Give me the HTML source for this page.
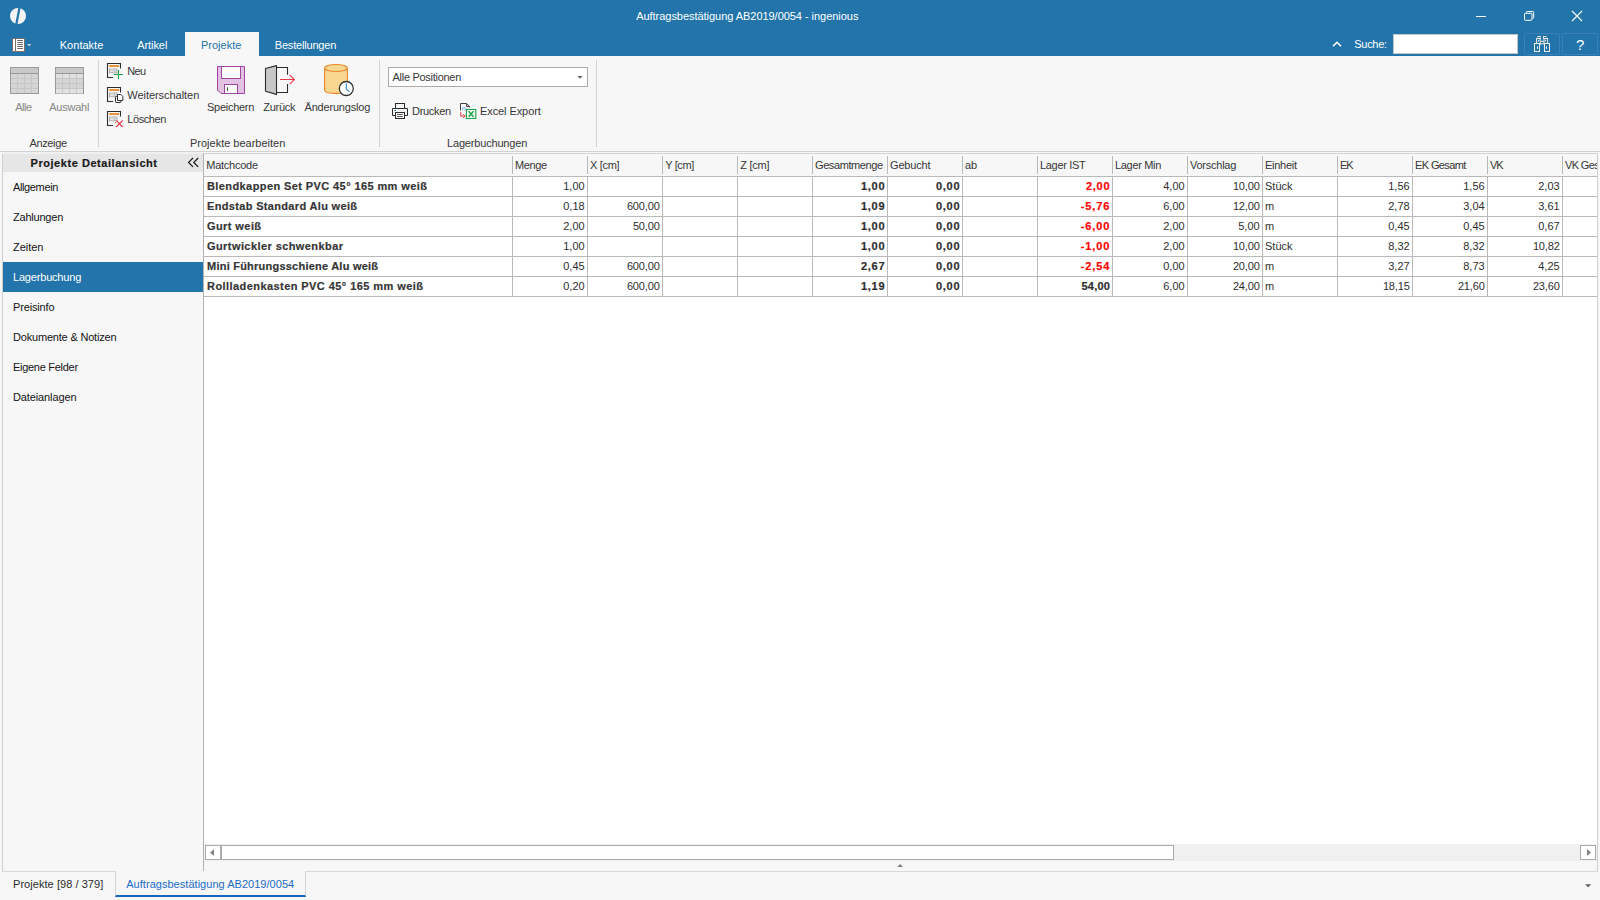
<!DOCTYPE html>
<html lang="de">
<head>
<meta charset="utf-8">
<title>Auftragsbestätigung AB2019/0054 - ingenious</title>
<style>
*{box-sizing:border-box;margin:0;padding:0}
html,body{width:1600px;height:900px;overflow:hidden;background:#f7f7f7}
body{font-family:"Liberation Sans",sans-serif;font-size:11px;color:#2b2b2b;position:relative}
.abs{position:absolute}
.t{position:absolute;white-space:nowrap;line-height:14px;height:14px}
#titlebar{left:0;top:0;width:1600px;height:56px;background:#2274aa}
#tabact{left:185px;top:32px;width:74px;height:24px;background:#f7f7f7}
#ribbon{left:0;top:56px;width:1600px;height:96px;background:#f7f7f7;border-bottom:1px solid #d2d2d2}
.rl{color:#383838}
.dis{color:#868686}
#left{left:2px;top:153px;width:201px;height:718px;background:#f7f7f7;border-left:1px solid #cfcfcf;border-top:1px solid #f0f0f0}
#lhead{left:3px;top:154px;width:200px;height:18px;background:#e6e6e6}
#navsel{left:3px;top:262px;width:200px;height:30px;background:#2274aa}
#grid{left:203px;top:153px;width:1395px;height:719px;background:#fff;border-left:1px solid #b2b2b2;border-right:1px solid #cfcfcf;border-top:1px solid #d4d4d4}
#ghead{left:204px;top:154px;width:1393px;height:22px;background:#f7f7f7}
.hl{position:absolute;left:204px;width:1393px;height:1px;background:#b9b9b9}
.vl{position:absolute;top:177px;height:120px;width:1px;background:#b9b9b9}
.hs{position:absolute;top:156px;height:18px;width:1px;background:#b9b9b9}
.h{color:#363636}
.b{font-weight:bold;-webkit-text-stroke:0.2px}
</style>
</head>
<body>
<div id="titlebar" class="abs"></div>
<div id="tabact" class="abs"></div>
<div id="ribbon" class="abs"></div>
<div id="left" class="abs"></div>
<div id="lhead" class="abs"></div>
<div id="navsel" class="abs"></div>
<div id="grid" class="abs"></div>
<div id="ghead" class="abs"></div>
<div class="t" style="left:636.20px;letter-spacing:-0.039px;top:9.19px;color:#ffffff;">Auftragsbestätigung AB2019/0054 - ingenious</div>
<div class="t" style="left:59.75px;letter-spacing:0.019px;top:38.19px;color:#ffffff;">Kontakte</div>
<div class="t" style="left:137.25px;letter-spacing:-0.077px;top:38.19px;color:#ffffff;">Artikel</div>
<div class="t" style="left:201.00px;letter-spacing:-0.004px;top:38.19px;color:#2274aa;">Projekte</div>
<div class="t" style="left:274.75px;letter-spacing:-0.187px;top:38.19px;color:#ffffff;">Bestellungen</div>
<div class="t" style="left:1354.25px;letter-spacing:-0.286px;top:37.19px;color:#ffffff;">Suche:</div>
<div class="abs" style="left:1393px;top:34px;width:125px;height:20px;background:#ffffff;border:1px solid #c6c6c6;"></div>
<div class="t" style="left:1576.10px;top:37.80px;font-size:15px;color:#ffffff;">?</div>
<div class="abs" style="left:98px;top:60px;width:1px;height:87px;background:#d2d2d2;"></div>
<div class="abs" style="left:379px;top:60px;width:1px;height:87px;background:#d2d2d2;"></div>
<div class="abs" style="left:596px;top:60px;width:1px;height:87px;background:#d2d2d2;"></div>
<div class="t dis" style="left:15.25px;letter-spacing:-0.498px;top:100.19px;">Alle</div>
<div class="t dis" style="left:49.25px;letter-spacing:-0.249px;top:100.19px;">Auswahl</div>
<div class="t rl" style="left:29.50px;letter-spacing:-0.364px;top:136.19px;">Anzeige</div>
<div class="t rl" style="left:127.25px;letter-spacing:-0.669px;top:64.19px;">Neu</div>
<div class="t rl" style="left:127.25px;letter-spacing:-0.037px;top:88.19px;">Weiterschalten</div>
<div class="t rl" style="left:127.25px;letter-spacing:-0.421px;top:112.19px;">Löschen</div>
<div class="t rl" style="left:207.00px;letter-spacing:-0.277px;top:100.19px;">Speichern</div>
<div class="t rl" style="left:263.25px;letter-spacing:-0.255px;top:100.19px;">Zurück</div>
<div class="t rl" style="left:304.50px;letter-spacing:-0.190px;top:100.19px;">Änderungslog</div>
<div class="t rl" style="left:190.00px;letter-spacing:-0.007px;top:136.19px;">Projekte bearbeiten</div>
<div class="abs" style="left:388px;top:67px;width:200px;height:20px;background:#ffffff;border:1px solid #ababab;"></div>
<div class="t rl" style="left:392.50px;letter-spacing:-0.283px;top:70.19px;">Alle Positionen</div>
<div class="t rl" style="left:412.00px;letter-spacing:-0.311px;top:104.19px;">Drucken</div>
<div class="t rl" style="left:480.00px;letter-spacing:-0.085px;top:104.19px;">Excel Export</div>
<div class="t rl" style="left:447.00px;letter-spacing:-0.177px;top:136.19px;">Lagerbuchungen</div>
<div class="abs" style="left:3px;top:152px;width:200px;height:1px;background:#f1f1f1;"></div>
<div class="t b" style="left:30.50px;letter-spacing:0.552px;top:156.19px;color:#1a1a1a;">Projekte Detailansicht</div>
<div class="t" style="left:13.00px;letter-spacing:-0.370px;top:180.19px;color:#141414;">Allgemein</div>
<div class="t" style="left:13.00px;letter-spacing:-0.210px;top:210.19px;color:#141414;">Zahlungen</div>
<div class="t" style="left:13.00px;letter-spacing:-0.049px;top:240.19px;color:#141414;">Zeiten</div>
<div class="t" style="left:13.00px;letter-spacing:-0.187px;top:270.19px;color:#ffffff;">Lagerbuchung</div>
<div class="t" style="left:13.00px;letter-spacing:-0.152px;top:300.19px;color:#141414;">Preisinfo</div>
<div class="t" style="left:13.00px;letter-spacing:-0.192px;top:330.19px;color:#141414;">Dokumente &amp; Notizen</div>
<div class="t" style="left:13.00px;letter-spacing:-0.286px;top:360.19px;color:#141414;">Eigene Felder</div>
<div class="t" style="left:13.00px;letter-spacing:-0.116px;top:390.19px;color:#141414;">Dateianlagen</div>
<div class="hl" style="top:176px"></div>
<div class="hl" style="top:196px"></div>
<div class="hl" style="top:216px"></div>
<div class="hl" style="top:236px"></div>
<div class="hl" style="top:256px"></div>
<div class="hl" style="top:276px"></div>
<div class="hl" style="top:296px"></div>
<div class="hs" style="left:512px"></div>
<div class="vl" style="left:512px"></div>
<div class="hs" style="left:587px"></div>
<div class="vl" style="left:587px"></div>
<div class="hs" style="left:662px"></div>
<div class="vl" style="left:662px"></div>
<div class="hs" style="left:737px"></div>
<div class="vl" style="left:737px"></div>
<div class="hs" style="left:812px"></div>
<div class="vl" style="left:812px"></div>
<div class="hs" style="left:887px"></div>
<div class="vl" style="left:887px"></div>
<div class="hs" style="left:962px"></div>
<div class="vl" style="left:962px"></div>
<div class="hs" style="left:1037px"></div>
<div class="vl" style="left:1037px"></div>
<div class="hs" style="left:1112px"></div>
<div class="vl" style="left:1112px"></div>
<div class="hs" style="left:1187px"></div>
<div class="vl" style="left:1187px"></div>
<div class="hs" style="left:1262px"></div>
<div class="vl" style="left:1262px"></div>
<div class="hs" style="left:1337px"></div>
<div class="vl" style="left:1337px"></div>
<div class="hs" style="left:1412px"></div>
<div class="vl" style="left:1412px"></div>
<div class="hs" style="left:1487px"></div>
<div class="vl" style="left:1487px"></div>
<div class="hs" style="left:1562px"></div>
<div class="vl" style="left:1562px"></div>
<div class="t h" style="left:206.25px;letter-spacing:-0.249px;top:158.19px;">Matchcode</div>
<div class="t h" style="left:515.00px;letter-spacing:-0.389px;top:158.19px;">Menge</div>
<div class="t h" style="left:590.00px;letter-spacing:-0.317px;top:158.19px;">X [cm]</div>
<div class="t h" style="left:665.25px;letter-spacing:-0.377px;top:158.19px;">Y [cm]</div>
<div class="t h" style="left:740.25px;letter-spacing:-0.242px;top:158.19px;">Z [cm]</div>
<div class="t h" style="left:815.00px;letter-spacing:-0.409px;top:158.19px;">Gesamtmenge</div>
<div class="t h" style="left:890.00px;letter-spacing:-0.171px;top:158.19px;">Gebucht</div>
<div class="t h" style="left:965.00px;letter-spacing:-0.150px;top:158.19px;">ab</div>
<div class="t h" style="left:1040.00px;letter-spacing:-0.312px;top:158.19px;">Lager IST</div>
<div class="t h" style="left:1115.00px;letter-spacing:-0.323px;top:158.19px;">Lager Min</div>
<div class="t h" style="left:1190.00px;letter-spacing:-0.247px;top:158.19px;">Vorschlag</div>
<div class="t h" style="left:1265.00px;letter-spacing:-0.259px;top:158.19px;">Einheit</div>
<div class="t h" style="left:1340.00px;letter-spacing:-1.000px;top:158.19px;">EK</div>
<div class="t h" style="left:1415.00px;letter-spacing:-0.616px;top:158.19px;">EK Gesamt</div>
<div class="t h" style="left:1490.00px;letter-spacing:-1.000px;top:158.19px;">VK</div>
<div class="abs" style="left:1563px;top:154px;width:34px;height:22px;overflow:hidden">
<div class="t h" style="left:2px;top:4.19px;letter-spacing:-0.623px">VK Gesamt</div></div>
<div class="t b" style="left:207.00px;letter-spacing:0.406px;top:179.19px;color:#363636;">Blendkappen Set PVC 45° 165 mm weiß</div>
<div class="t" style="right:1015.30px;top:179.19px;letter-spacing:0.021px;color:#2e2e2e;">1,00</div>
<div class="t b" style="right:714.80px;top:179.19px;letter-spacing:0.688px;color:#2e2e2e;">1,00</div>
<div class="t b" style="right:639.80px;top:179.19px;letter-spacing:0.688px;color:#2e2e2e;">0,00</div>
<div class="t b" style="right:489.80px;top:179.19px;letter-spacing:0.688px;color:#ff0000;">2,00</div>
<div class="t" style="right:415.30px;top:179.19px;letter-spacing:0.021px;color:#2e2e2e;">4,00</div>
<div class="t" style="right:340.30px;top:179.19px;letter-spacing:-0.141px;color:#2e2e2e;">10,00</div>
<div class="t" style="left:1265.00px;top:179.19px;color:#2e2e2e;">Stück</div>
<div class="t" style="right:190.30px;top:179.19px;letter-spacing:0.021px;color:#2e2e2e;">1,56</div>
<div class="t" style="right:115.30px;top:179.19px;letter-spacing:0.021px;color:#2e2e2e;">1,56</div>
<div class="t" style="right:40.30px;top:179.19px;letter-spacing:0.021px;color:#2e2e2e;">2,03</div>
<div class="t b" style="left:207.00px;letter-spacing:0.335px;top:199.19px;color:#363636;">Endstab Standard Alu weiß</div>
<div class="t" style="right:1015.30px;top:199.19px;letter-spacing:0.021px;color:#2e2e2e;">0,18</div>
<div class="t" style="right:940.30px;top:199.19px;letter-spacing:-0.138px;color:#2e2e2e;">600,00</div>
<div class="t b" style="right:714.80px;top:199.19px;letter-spacing:0.688px;color:#2e2e2e;">1,09</div>
<div class="t b" style="right:639.80px;top:199.19px;letter-spacing:0.688px;color:#2e2e2e;">0,00</div>
<div class="t b" style="right:489.80px;top:199.19px;letter-spacing:0.852px;color:#ff0000;">-5,76</div>
<div class="t" style="right:415.30px;top:199.19px;letter-spacing:0.021px;color:#2e2e2e;">6,00</div>
<div class="t" style="right:340.30px;top:199.19px;letter-spacing:-0.141px;color:#2e2e2e;">12,00</div>
<div class="t" style="left:1265.00px;top:199.19px;color:#2e2e2e;">m</div>
<div class="t" style="right:190.30px;top:199.19px;letter-spacing:0.021px;color:#2e2e2e;">2,78</div>
<div class="t" style="right:115.30px;top:199.19px;letter-spacing:0.021px;color:#2e2e2e;">3,04</div>
<div class="t" style="right:40.30px;top:199.19px;letter-spacing:0.021px;color:#2e2e2e;">3,61</div>
<div class="t b" style="left:207.00px;letter-spacing:0.419px;top:219.19px;color:#363636;">Gurt weiß</div>
<div class="t" style="right:1015.30px;top:219.19px;letter-spacing:0.021px;color:#2e2e2e;">2,00</div>
<div class="t" style="right:940.30px;top:219.19px;letter-spacing:-0.141px;color:#2e2e2e;">50,00</div>
<div class="t b" style="right:714.80px;top:219.19px;letter-spacing:0.688px;color:#2e2e2e;">1,00</div>
<div class="t b" style="right:639.80px;top:219.19px;letter-spacing:0.688px;color:#2e2e2e;">0,00</div>
<div class="t b" style="right:489.80px;top:219.19px;letter-spacing:0.852px;color:#ff0000;">-6,00</div>
<div class="t" style="right:415.30px;top:219.19px;letter-spacing:0.021px;color:#2e2e2e;">2,00</div>
<div class="t" style="right:340.30px;top:219.19px;letter-spacing:0.021px;color:#2e2e2e;">5,00</div>
<div class="t" style="left:1265.00px;top:219.19px;color:#2e2e2e;">m</div>
<div class="t" style="right:190.30px;top:219.19px;letter-spacing:0.021px;color:#2e2e2e;">0,45</div>
<div class="t" style="right:115.30px;top:219.19px;letter-spacing:0.021px;color:#2e2e2e;">0,45</div>
<div class="t" style="right:40.30px;top:219.19px;letter-spacing:0.021px;color:#2e2e2e;">0,67</div>
<div class="t b" style="left:207.00px;letter-spacing:0.421px;top:239.19px;color:#363636;">Gurtwickler schwenkbar</div>
<div class="t" style="right:1015.30px;top:239.19px;letter-spacing:0.021px;color:#2e2e2e;">1,00</div>
<div class="t b" style="right:714.80px;top:239.19px;letter-spacing:0.688px;color:#2e2e2e;">1,00</div>
<div class="t b" style="right:639.80px;top:239.19px;letter-spacing:0.688px;color:#2e2e2e;">0,00</div>
<div class="t b" style="right:489.80px;top:239.19px;letter-spacing:0.852px;color:#ff0000;">-1,00</div>
<div class="t" style="right:415.30px;top:239.19px;letter-spacing:0.021px;color:#2e2e2e;">2,00</div>
<div class="t" style="right:340.30px;top:239.19px;letter-spacing:-0.141px;color:#2e2e2e;">10,00</div>
<div class="t" style="left:1265.00px;top:239.19px;color:#2e2e2e;">Stück</div>
<div class="t" style="right:190.30px;top:239.19px;letter-spacing:0.021px;color:#2e2e2e;">8,32</div>
<div class="t" style="right:115.30px;top:239.19px;letter-spacing:0.021px;color:#2e2e2e;">8,32</div>
<div class="t" style="right:40.30px;top:239.19px;letter-spacing:-0.141px;color:#2e2e2e;">10,82</div>
<div class="t b" style="left:207.00px;letter-spacing:0.229px;top:259.19px;color:#363636;">Mini Führungsschiene Alu weiß</div>
<div class="t" style="right:1015.30px;top:259.19px;letter-spacing:0.021px;color:#2e2e2e;">0,45</div>
<div class="t" style="right:940.30px;top:259.19px;letter-spacing:-0.138px;color:#2e2e2e;">600,00</div>
<div class="t b" style="right:714.80px;top:259.19px;letter-spacing:0.688px;color:#2e2e2e;">2,67</div>
<div class="t b" style="right:639.80px;top:259.19px;letter-spacing:0.688px;color:#2e2e2e;">0,00</div>
<div class="t b" style="right:489.80px;top:259.19px;letter-spacing:0.852px;color:#ff0000;">-2,54</div>
<div class="t" style="right:415.30px;top:259.19px;letter-spacing:0.021px;color:#2e2e2e;">0,00</div>
<div class="t" style="right:340.30px;top:259.19px;letter-spacing:-0.141px;color:#2e2e2e;">20,00</div>
<div class="t" style="left:1265.00px;top:259.19px;color:#2e2e2e;">m</div>
<div class="t" style="right:190.30px;top:259.19px;letter-spacing:0.021px;color:#2e2e2e;">3,27</div>
<div class="t" style="right:115.30px;top:259.19px;letter-spacing:0.021px;color:#2e2e2e;">8,73</div>
<div class="t" style="right:40.30px;top:259.19px;letter-spacing:0.021px;color:#2e2e2e;">4,25</div>
<div class="t b" style="left:207.00px;letter-spacing:0.432px;top:279.19px;color:#363636;">Rollladenkasten PVC 45° 165 mm weiß</div>
<div class="t" style="right:1015.30px;top:279.19px;letter-spacing:0.021px;color:#2e2e2e;">0,20</div>
<div class="t" style="right:940.30px;top:279.19px;letter-spacing:-0.138px;color:#2e2e2e;">600,00</div>
<div class="t b" style="right:714.80px;top:279.19px;letter-spacing:0.688px;color:#2e2e2e;">1,19</div>
<div class="t b" style="right:639.80px;top:279.19px;letter-spacing:0.688px;color:#2e2e2e;">0,00</div>
<div class="t b" style="right:489.80px;top:279.19px;letter-spacing:0.234px;color:#2e2e2e;">54,00</div>
<div class="t" style="right:415.30px;top:279.19px;letter-spacing:0.021px;color:#2e2e2e;">6,00</div>
<div class="t" style="right:340.30px;top:279.19px;letter-spacing:-0.141px;color:#2e2e2e;">24,00</div>
<div class="t" style="left:1265.00px;top:279.19px;color:#2e2e2e;">m</div>
<div class="t" style="right:190.30px;top:279.19px;letter-spacing:-0.141px;color:#2e2e2e;">18,15</div>
<div class="t" style="right:115.30px;top:279.19px;letter-spacing:-0.141px;color:#2e2e2e;">21,60</div>
<div class="t" style="right:40.30px;top:279.19px;letter-spacing:-0.141px;color:#2e2e2e;">23,60</div>
<div class="abs" style="left:204px;top:844px;width:1393px;height:17px;background:#f0f0f0;"></div>
<div class="abs" style="left:205px;top:845px;width:16px;height:15px;background:#ffffff;border:1px solid #ababab;"></div>
<div class="abs" style="left:221px;top:845px;width:953px;height:15px;background:#ffffff;border:1px solid #ababab;"></div>
<div class="abs" style="left:1580px;top:845px;width:16px;height:15px;background:#ffffff;border:1px solid #ababab;"></div>
<div class="abs" style="left:204px;top:861px;width:1393px;height:10px;background:#f7f7f7;"></div>
<div class="abs" style="left:2px;top:871px;width:1596px;height:1px;background:#d9d9d9;"></div>
<div class="t" style="left:13.00px;letter-spacing:0.054px;top:876.69px;color:#2b2b2b;">Projekte [98 / 379]</div>
<div class="abs" style="left:115px;top:871px;width:191px;height:26px;background:#f7f7f7;border-left:1px solid #d4d4d4;border-right:1px solid #d4d4d4;border-bottom:2px solid #1565c0;"></div>
<div class="t" style="left:126.25px;letter-spacing:0.032px;top:876.69px;color:#1a6cc6;">Auftragsbestätigung AB2019/0054</div>
<svg class="abs" style="left:0;top:0" width="1600" height="900" viewBox="0 0 1600 900"><circle cx="18" cy="16" r="8" fill="#f4f4f4"/><path d="M19.6 7.2 L16.2 24.8" stroke="#2274aa" stroke-width="2.2" fill="none"/><rect x="12.5" y="38.5" width="12" height="13" fill="#fff" stroke="#7a716c"/><path d="M15.5 38.5V51.5" stroke="#7a716c" fill="none"/><path d="M17.3 40.5H23M17.3 42.5H23M17.3 44.5H23M17.3 46.5H23M17.3 48.5H23" stroke="#6c6866" fill="none"/><path d="M27 44H31.4L29.2 46.6Z" fill="#bccfe0"/><path d="M1476 16.5H1486" stroke="#fff" fill="none"/><rect x="1524.5" y="13.3" width="7.5" height="7" rx=".8" fill="none" stroke="#fff"/><path d="M1526.5 13V12.3Q1526.5 11.5 1527.3 11.5H1532.9Q1533.7 11.5 1533.7 12.3V17.5Q1533.7 18.3 1532.9 18.3H1532.3" fill="none" stroke="#fff"/><path d="M1572 11L1582 21M1582 11L1572 21" stroke="#fff" stroke-width="1.1" fill="none"/><path d="M1333 46.3L1337 42.3L1341 46.3" stroke="#fff" stroke-width="1.6" fill="none"/><rect x="1524.5" y="33.5" width="35" height="21" rx="2" fill="none" stroke="#3c82b6"/><rect x="1562.5" y="33.5" width="35" height="21" rx="2" fill="none" stroke="#3c82b6"/><g fill="none" stroke="#f0ebe6"><rect x="1534.5" y="43.5" width="5" height="8"/><rect x="1544.5" y="43.5" width="5" height="8"/><rect x="1536.6" y="38.6" width="3.6" height="4.9"/><rect x="1544" y="38.6" width="3.6" height="4.9"/><rect x="1538" y="36.5" width="2.2" height="2"/><rect x="1543.6" y="36.5" width="2.2" height="2"/><path d="M1540.5 41.3H1544"/><path d="M1540 44.5Q1542.2 42.5 1544.5 44.5" /><path d="M1537.5 46.3V49M1546.5 46.3V49M1538.4 40V41.5M1545.6 40V41.5"/></g><rect x="10.5" y="67.5" width="28" height="26" fill="#d5d5d5" stroke="#999"/><rect x="11" y="68" width="27" height="5.5" fill="#c8c8c8"/><path d="M10 73.5H39" stroke="#999" fill="none"/><path d="M17.5 74V93M24.5 74V93M31.5 74V93M11 78.5H38M11 83.5H38M11 88.5H38" stroke="#c6c6c6" fill="none"/><rect x="55.5" y="67.5" width="28" height="26" fill="#d5d5d5" stroke="#999"/><rect x="56" y="74" width="27" height="5" fill="#e1e1e1"/><rect x="56" y="88.5" width="27" height="5" fill="#e1e1e1"/><rect x="56" y="68" width="27" height="5.5" fill="#c8c8c8"/><path d="M55 73.5H84" stroke="#999" fill="none"/><path d="M62.5 74V93M69.5 74V93M76.5 74V93M56 78.5H83M56 83.5H83M56 88.5H83" stroke="#c6c6c6" fill="none"/><path d="M120.5 68.5V63.5H107.5V77.5H113" fill="none" stroke="#2d2d2d" stroke-width="1.1"/><rect x="109.2" y="65.2" width="9.8" height="1.7" fill="#e8821e"/><rect x="109.5" y="69" width="7.5" height="3.8" fill="#f2f2f2" stroke="#a0a0a0" stroke-width=".8"/><path d="M109.5 70.9H117M114.6 69V72.8" fill="none" stroke="#b8b8b8" stroke-width=".7"/><path d="M114 74.5H123M118.5 70V79" stroke="#18a54a" stroke-width="1.1" fill="none"/><path d="M120.5 92.5V87.5H107.5V101.5H113" fill="none" stroke="#2d2d2d" stroke-width="1.1"/><rect x="109.2" y="89.2" width="9.8" height="1.7" fill="#e8821e"/><rect x="109.5" y="93" width="7.5" height="3.8" fill="#f2f2f2" stroke="#a0a0a0" stroke-width=".8"/><path d="M109.5 94.9H117M114.6 93V96.8" fill="none" stroke="#b8b8b8" stroke-width=".7"/><rect x="115.5" y="96.5" width="5.5" height="6" rx="0.8" fill="#fff" stroke="#2d2d2d"/><path d="M117.5 94.5H120.8L122.8 96.5V100.5H117.5Z" fill="#fff" stroke="#2d2d2d" stroke-linejoin="round"/><path d="M120.5 116.5V111.5H107.5V125.5H113" fill="none" stroke="#2d2d2d" stroke-width="1.1"/><rect x="109.2" y="113.2" width="9.8" height="1.7" fill="#e8821e"/><rect x="109.5" y="117" width="7.5" height="3.8" fill="#f2f2f2" stroke="#a0a0a0" stroke-width=".8"/><path d="M109.5 118.9H117M114.6 117V120.8" fill="none" stroke="#b8b8b8" stroke-width=".7"/><path d="M116.2 120.3L122.8 127M122.8 120.3L116.2 127" stroke="#e8384a" stroke-width="1.1" fill="none"/><rect x="115" y="122" width="1" height="1" fill="#e8821e"/><path d="M217.5 66.5H244.5V93.5H221L217.5 90Z" fill="#e2c2e2" stroke="#a345a3"/><rect x="221.5" y="66.5" width="19" height="12" fill="#fbfbfb" stroke="#a345a3"/><rect x="224.5" y="84.5" width="13" height="9" fill="#fbfbfb" stroke="#a345a3"/><path d="M227.5 87.3V91" stroke="#4a4a4a" fill="none"/><path d="M265.5 68.5L276.5 65.6V94.4L265.5 91.2Z" fill="#c8c8c8" stroke="#2d2d2d" stroke-width="1.1" stroke-linejoin="round"/><path d="M277 67.5H287.5V74.8M287.5 84V92.5H277" fill="none" stroke="#2d2d2d" stroke-width="1.1"/><path d="M280 79.5H294.4M289.7 74.8L294.4 79.5L289.7 84.2" fill="none" stroke="#e8384a" stroke-width="1.1"/><path d="M324.6 68V90Q324.6 93.4 336 93.4Q347.4 93.4 347.4 90V68" fill="#f8d890" stroke="#e8872c" stroke-width="1.1"/><ellipse cx="336" cy="68" rx="11.4" ry="3.5" fill="#f8d890" stroke="#e8872c" stroke-width="1.1"/><circle cx="346.3" cy="88.5" r="7" fill="#fff" stroke="#333" stroke-width="1.3"/><path d="M346.3 83.3V88.8L349.4 91.8" fill="none" stroke="#2a84d2" stroke-width="1.1"/><path d="M577.3 76H582.7L580 78.8Z" fill="#6a6a6a"/><rect x="395.5" y="103.5" width="9" height="5" fill="#f7f7f7" stroke="#2d2d2d"/><path d="M395.5 115.5H392.5V108.5H407.5V115.5H404.5" fill="#f7f7f7" stroke="#2d2d2d"/><rect x="395.5" y="112.5" width="9" height="6" fill="#f7f7f7" stroke="#2d2d2d"/><path d="M397 114.5H402.8M397 116.5H402.8" stroke="#4a4a4a" stroke-width=".9" fill="none"/><rect x="394.2" y="110" width="1.8" height="1" fill="#2a84d2"/><path d="M460.5 110.5V103.5H466.6L469.6 106.5V107.6M466.6 104V106.5H469.2" fill="none" stroke="#2d2d2d" stroke-width=".9"/><path d="M462.5 110.5V107.5H465.5V110.5M462.5 109H465.5" fill="none" stroke="#9cc4ee" stroke-width=".9"/><path d="M460.7 112.2V116H465M463.2 114.2L465.2 116L463.2 117.8" fill="none" stroke="#e8384a" stroke-width="1"/><rect x="466.4" y="109.5" width="9.4" height="8.9" fill="#fff" stroke="#18a54a" stroke-width="1.1"/><path d="M468.7 111.3L473.5 116.8M473.5 111.3L468.7 116.8" stroke="#18a54a" stroke-width="1.5" fill="none"/><path d="M193 158L188.6 162.4L193 166.8M198.2 158L193.8 162.4L198.2 166.8" fill="none" stroke="#111" stroke-width="1.2"/><path d="M214 849.2V856L210 852.6Z" fill="#808080"/><path d="M1587 849V856L1591 852.5Z" fill="#808080"/><path d="M897.4 867H902.8L900.1 864Z" fill="#7a7a7a"/><path d="M1585 884.2H1591.2L1588.1 887.3Z" fill="#5e5e5e"/></svg>
</body>
</html>
